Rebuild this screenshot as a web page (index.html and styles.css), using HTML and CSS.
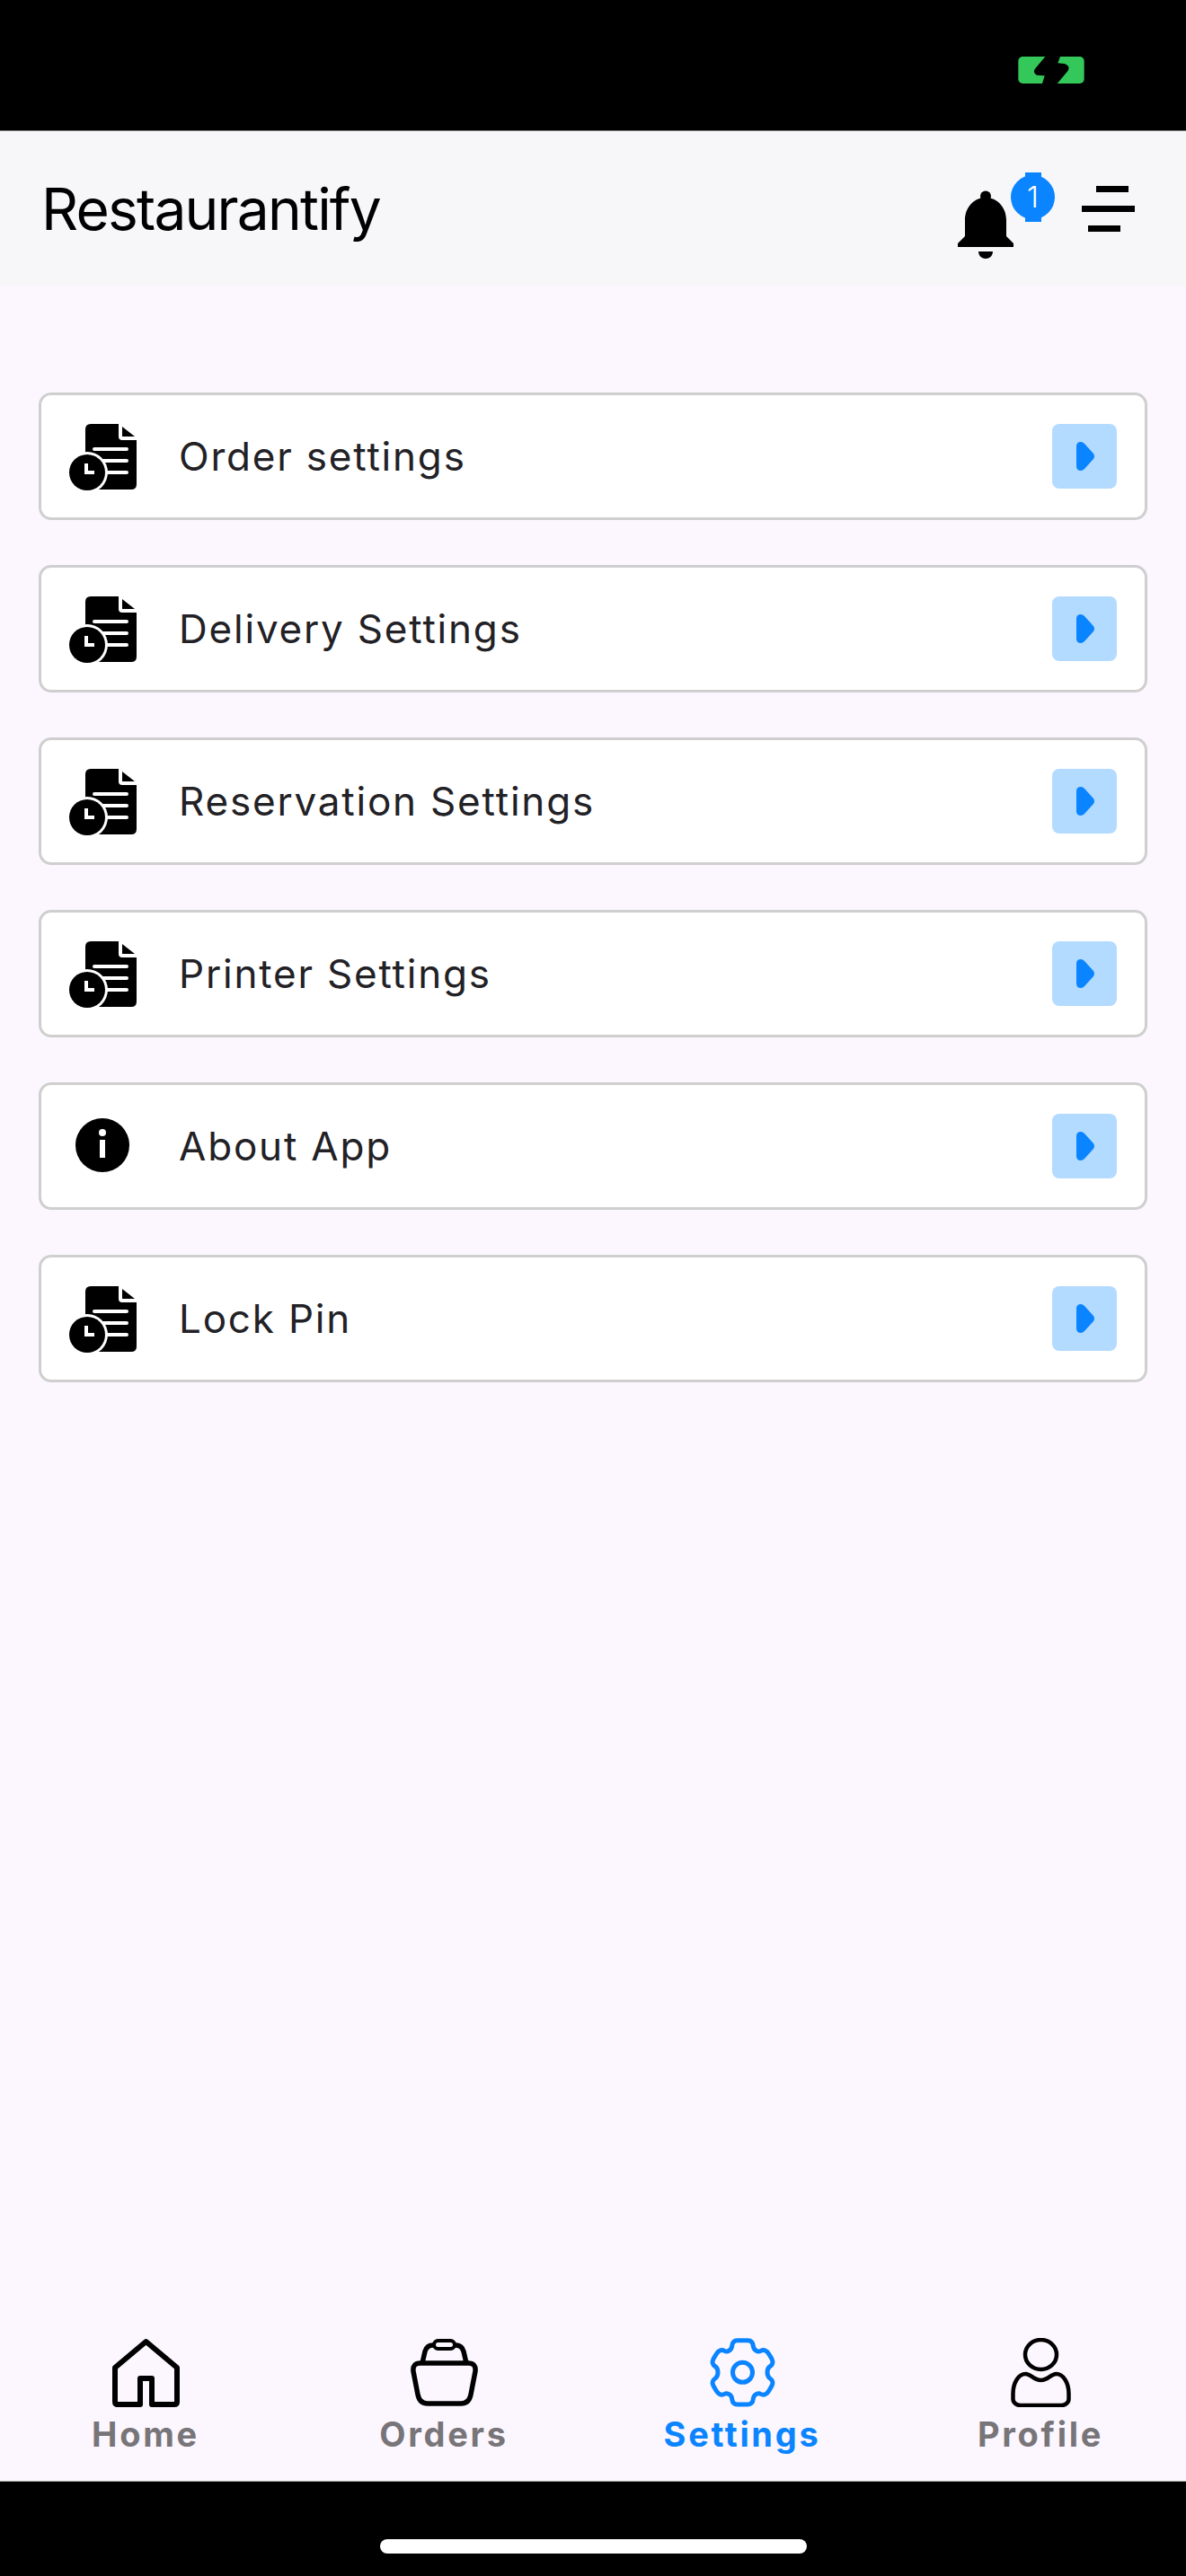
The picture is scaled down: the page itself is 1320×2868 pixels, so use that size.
FILE: index.html
```html
<!DOCTYPE html>
<html lang="en">
<head>
<meta charset="utf-8">
<title>Restaurantify</title>
<link rel="stylesheet" href="styles.css">
</head>
<body>
<svg class="defs" aria-hidden="true">
  <symbol id="doc" viewBox="0 0 75 75">
    <path d="M24 1H55V15Q55 19 59 19H75V68Q75 74 69 74H18V7Q18 1 24 1Z" fill="#000"/>
    <path d="M59 4L73 15H59Z" fill="#000"/>
    <path d="M28 29H64M28 42H64M28 55H64" stroke="#fff" stroke-width="4" stroke-linecap="round" fill="none"/>
    <circle cx="20" cy="55" r="23" fill="#fff"/>
    <circle cx="20" cy="55" r="20" fill="#000"/>
    <path d="M19 45V55H28" stroke="#fff" stroke-width="4" fill="none"/>
  </symbol>
  <symbol id="play" viewBox="0 0 72 72">
    <path d="M27 25Q27 20 32 20Q34 20 36 22L46 33Q48 36 46 39L36 50Q34 52 32 52Q27 52 27 47Z" fill="#0a84ff"/>
  </symbol>
</svg>
<div class="app">
  <div class="status">
    <svg class="battery" viewBox="400 68 220 90">
      <rect x="400" y="68" width="220" height="90" rx="15" fill="#34c759"/>
      <path d="M490 68L455 110Q448 122 462 130L488 132L480 158H530L566 115Q575 100 555 92L532 90L540 68Z" fill="#000"/>
    </svg>
  </div>
  <header class="header">
    <h1 class="title">Restaurantify</h1>
    <div class="actions">
      <div class="bell-wrap">
        <svg class="bell" viewBox="0 0 62 76">
          <circle cx="31" cy="6.500" r="6" fill="#000"/>
          <path d="M31 8C17 8 8 20 8 33V51L0 59V63H62V59L54 51V33C54 20 45 8 31 8Z" fill="#000"/>
          <path d="M23 68H39C39 73 35 76 31 76C27 76 23 73 23 68Z" fill="#000"/>
        </svg>
        <span class="badge">1</span>
      </div>
      <div class="menu">
        <span class="menu-line menu-line-a"></span>
        <span class="menu-line menu-line-b"></span>
        <span class="menu-line menu-line-c"></span>
      </div>
    </div>
  </header>
  <main class="list">
    <div class="row">
      <svg class="row-icon"><use href="#doc"/></svg>
      <span class="row-label">Order settings</span>
      <span class="go"><svg class="go-icon"><use href="#play"/></svg></span>
    </div>
    <div class="row">
      <svg class="row-icon"><use href="#doc"/></svg>
      <span class="row-label">Delivery Settings</span>
      <span class="go"><svg class="go-icon"><use href="#play"/></svg></span>
    </div>
    <div class="row">
      <svg class="row-icon"><use href="#doc"/></svg>
      <span class="row-label">Reservation Settings</span>
      <span class="go"><svg class="go-icon"><use href="#play"/></svg></span>
    </div>
    <div class="row">
      <svg class="row-icon"><use href="#doc"/></svg>
      <span class="row-label">Printer Settings</span>
      <span class="go"><svg class="go-icon"><use href="#play"/></svg></span>
    </div>
    <div class="row">
      <svg class="row-icon" viewBox="0 0 75 75">
        <circle cx="37" cy="36" r="30" fill="#000"/>
        <circle cx="37" cy="22" r="4" fill="#fff"/>
        <rect x="34" y="30" width="6" height="20" fill="#fff"/>
      </svg>
      <span class="row-label">About App</span>
      <span class="go"><svg class="go-icon"><use href="#play"/></svg></span>
    </div>
    <div class="row">
      <svg class="row-icon"><use href="#doc"/></svg>
      <span class="row-label">Lock Pin</span>
      <span class="go"><svg class="go-icon"><use href="#play"/></svg></span>
    </div>
  </main>
  <nav class="tabs">
    <div class="tab">
      <svg class="tab-icon" viewBox="0 0 75 77">
        <path d="M37.500 4L3 33V71Q3 74 6 74H31V45H44V74H69Q72 74 72 71V33Z" fill="none" stroke="#000" stroke-width="6" stroke-linejoin="round"/>
      </svg>
      <span class="tab-label">Home</span>
    </div>
    <div class="tab">
      <svg class="tab-icon" viewBox="0 0 75 77">
        <path d="M11 28H64Q73 28 72 37L67 63Q65 73 56 73H19Q10 73 8 63L3 37Q2 28 11 28Z" fill="none" stroke="#000" stroke-width="5.500"/>
        <path d="M13 28L16 15Q18 8 25 8H50Q57 8 59 15L62 28" fill="none" stroke="#000" stroke-width="5.500"/>
        <rect x="26" y="3" width="23" height="9" rx="4.500" fill="#fcf7ff" stroke="#000" stroke-width="4"/>
      </svg>
      <span class="tab-label">Orders</span>
    </div>
    <div class="tab tab-active">
      <svg class="tab-icon" viewBox="30 25 225 231">
        <path d="M125 33H160C172 33 177 42 178 52C179 64 192 74 203 68C214 62 224 68 230 78L240 95C246 106 242 115 234 120C222 128 222 152 234 160C242 165 246 174 240 185L230 202C224 212 214 218 203 212C192 206 179 216 178 228C177 238 172 247 160 247H125C113 247 108 238 107 228C106 216 93 206 82 212C71 218 61 212 55 202L45 185C39 174 43 165 51 160C63 152 63 128 51 120C43 115 39 106 45 95L55 78C61 68 71 62 82 68C93 74 106 64 107 52C108 42 113 33 125 33Z" fill="none" stroke="#0a84ff" stroke-width="15"/>
        <circle cx="142.500" cy="140" r="33" fill="none" stroke="#0a84ff" stroke-width="15"/>
      </svg>
      <span class="tab-label">Settings</span>
    </div>
    <div class="tab">
      <svg class="tab-icon" viewBox="0 0 66 77">
        <ellipse cx="33" cy="18.500" rx="17.500" ry="16.500" fill="none" stroke="#000" stroke-width="4.500"/>
        <path d="M16 40C22 40 25 47 33 47C41 47 44 40 50 40C58 40 64 50 64 62V68C64 72 60 75 56 75H10C6 75 2 72 2 68V62C2 50 8 40 16 40Z" fill="none" stroke="#000" stroke-width="4.500"/>
      </svg>
      <span class="tab-label">Profile</span>
    </div>
  </nav>
  <div class="home-bar"><span class="home-indicator"></span></div>
</div>
</body>
</html>
```

FILE: styles.css
```css
* {
  box-sizing: border-box;
}

html,
body {
  margin: 0;
  padding: 0;
}

.defs {
  position: absolute;
  width: 0;
  height: 0;
}

.app {
  display: flex;
  flex-direction: column;
  width: 1320px;
  height: 2868px;
  background: #fcf7ff;
  font-family: Inter, "Liberation Sans", sans-serif;
}

.status {
  flex: none;
  display: flex;
  justify-content: flex-end;
  height: 146px;
  padding: 63px 113px 0 0;
  background: #000;
  border-bottom: 1px solid #777;
}

.battery {
  width: 74px;
  height: 30px;
}

.header {
  flex: none;
  display: flex;
  align-items: center;
  justify-content: space-between;
  height: 173px;
  padding: 0 57px 0 46px;
  background: #f7f7f9;
}

.title {
  margin: 0;
  font-size: 64px;
  font-weight: 400;
  letter-spacing: -1.800px;
  color: #000;
}

.actions {
  display: flex;
  align-items: center;
  gap: 76px;
}

.bell-wrap {
  position: relative;
  display: flex;
  align-items: flex-end;
  width: 62px;
  height: 110px;
}

.bell {
  width: 62px;
  height: 76px;
}

.badge {
  position: absolute;
  top: 17px;
  left: 59px;
  z-index: 1;
  width: 49px;
  height: 49px;
  border-radius: 50%;
  background: #0a84ff;
  color: #fff;
  font-size: 33px;
  font-weight: 300;
  line-height: 49px;
  text-align: center;
}

.badge::before {
  content: "";
  position: absolute;
  top: -3px;
  left: 16px;
  z-index: -1;
  width: 18px;
  height: 55px;
  background: #0a84ff;
}

.menu {
  display: flex;
  flex-direction: column;
  gap: 15px;
  width: 59px;
}

.menu-line {
  display: block;
  height: 7px;
  background: #000;
}

.menu-line-a {
  width: 36px;
  margin-left: 16px;
}

.menu-line-b {
  width: 59px;
}

.menu-line-c {
  width: 36px;
  margin-left: 7px;
}

.list {
  flex: 1;
  display: flex;
  flex-direction: column;
  gap: 50px;
  padding: 118px 43px 0;
}

.row {
  display: flex;
  align-items: center;
  height: 142px;
  padding: 0 31px;
  background: #fff;
  border: 3px solid #cfcfcf;
  border-radius: 14px;
}

.row-icon {
  flex: none;
  width: 75px;
  height: 75px;
}

.row-label {
  flex: 1;
  margin-left: 47px;
  font-size: 44px;
  letter-spacing: 1.800px;
  color: #222126;
}

.go {
  flex: none;
  display: flex;
  width: 72px;
  height: 72px;
  border-radius: 8px;
  background: #b3daff;
}

.go-icon {
  width: 72px;
  height: 72px;
}

.tabs {
  flex: none;
  display: grid;
  grid-template-columns: repeat(4, 332px);
  justify-content: center;
  height: 179px;
  padding-top: 20px;
}

.tab {
  display: flex;
  flex-direction: column;
  align-items: center;
  color: #787579;
}

.tab-icon {
  height: 77px;
  width: 75px;
}

.tab-label {
  margin-top: 7px;
  font-size: 38px;
  font-weight: 700;
  letter-spacing: 2.700px;
  line-height: 46px;
}

.tab-active {
  color: #0a84ff;
}

.home-bar {
  flex: none;
  display: flex;
  justify-content: center;
  height: 106px;
  padding-top: 64px;
  background: #000;
  border-top: 1px solid #aaa;
}

.home-indicator {
  width: 475px;
  height: 16px;
  border-radius: 8px;
  background: #fff;
}
```
